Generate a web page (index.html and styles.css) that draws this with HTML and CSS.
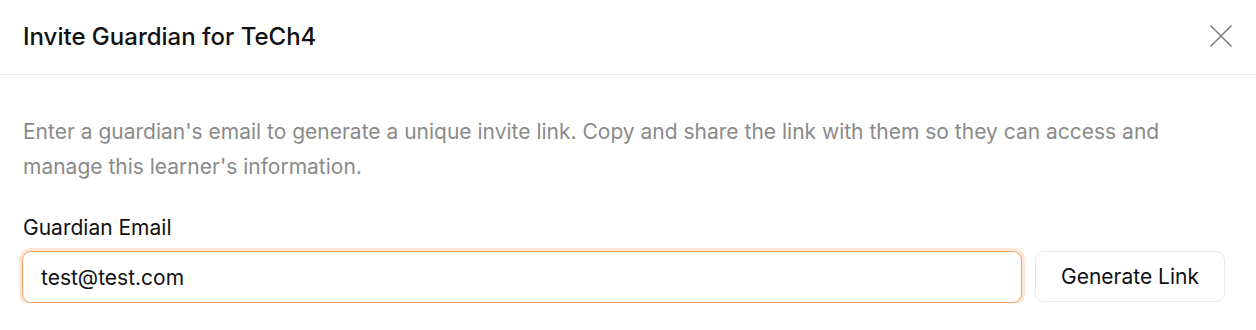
FILE: index.html
```html
<!DOCTYPE html>
<html lang="en">

<head>
    <meta charset="UTF-8">
    <meta name="viewport" content="width=device-width, initial-scale=1.0">
    <title>Invite Guardian</title>
    <link rel="stylesheet" href="styles.css">
</head>

<body>
    <div class="dialog">
        <div class="dialog_header">
            <h2 class="dialog_title">Invite Guardian for TeCh4</h2>
            <button class="close_btn" aria-label="Close">
                <svg width="22" height="22" viewBox="0 0 22 22" fill="none" stroke="#858585" stroke-width="1.7" stroke-linecap="round">
                    <path d="M1 1L21 21M21 1L1 21"></path>
                </svg>
            </button>
        </div>
        <div class="dialog_body">
            <p class="hint">Enter a guardian's email to generate a unique invite link. Copy and share the link with them so they can access and manage this learner's information.</p>
            <label class="field_label" for="email">Guardian Email</label>
            <div class="field_row">
                <input id="email" class="email_input" type="text" value="test@test.com">
                <button class="generate_btn">Generate Link</button>
            </div>
        </div>
    </div>
</body>

</html>
```

FILE: styles.css
```css
* {
    margin: 0;
    padding: 0;
    box-sizing: border-box;
}

body {
    background-color: #ffffff;
    font-family: Inter, "Noto Sans", sans-serif;
    color: #111111;
}

.dialog {
    width: 1256px;
}

.dialog_header {
    display: flex;
    align-items: center;
    justify-content: space-between;
    height: 75px;
    padding: 0 24px 2px 23px;
    border-bottom: 1px solid #e8e6f4;
}

.dialog_title {
    font-size: 24px;
    font-weight: 500;
}

.close_btn {
    display: flex;
    border: none;
    background: none;
    margin-top: -1px;
}

.dialog_body {
    padding: 39px 31px 0 23px;
}

.hint {
    font-size: 21px;
    line-height: 35px;
    color: #8a8a8a;
    margin-bottom: 32px;
}

.field_label {
    display: block;
    font-size: 21px;
    line-height: 24px;
    margin-bottom: 11px;
}

.field_row {
    display: flex;
    gap: 13px;
    margin-left: -1px;
}

.email_input {
    flex: 1;
    height: 52px;
    padding: 0 18px;
    border: 1px solid #f2a066;
    border-radius: 9px;
    box-shadow: 0 0 0 3px #fbe6d8;
    outline: none;
    font-family: Inter, "Noto Sans", sans-serif;
    font-size: 21px;
    color: #111111;
}

.generate_btn {
    width: 190px;
    height: 51px;
    border: 1px solid #e8e6f4;
    border-radius: 9px;
    background-color: #ffffff;
    font-family: Inter, "Noto Sans", sans-serif;
    font-size: 21px;
    color: #111111;
}
```
